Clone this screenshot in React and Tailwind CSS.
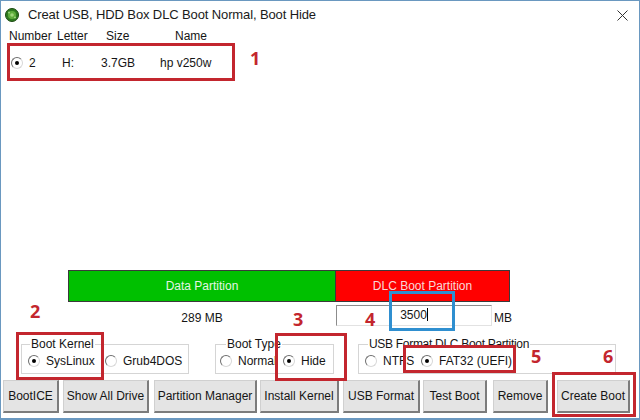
import React from "react";

const Radio = ({ checked }) => (
  <span className="flex-none w-[12px] h-[12px] rounded-full bg-white border border-t-[#6e6e6e] border-l-[#6e6e6e] border-r-[#d8d8d8] border-b-[#d8d8d8] flex items-center justify-center">
    {checked && <span className="w-[4px] h-[4px] rounded-full bg-black"></span>}
  </span>
);

const Option = ({ checked, label, className = "" }) => (
  <div className={"flex items-center " + className}>
    <Radio checked={checked} />
    <span className="ml-[6px] whitespace-nowrap">{label}</span>
  </div>
);

const buttons = [
  { label: "BootICE", cls: "ml-[2px] w-[56px]" },
  { label: "Show All Drive", cls: "ml-[4px] w-[86px]" },
  { label: "Partition Manager", cls: "ml-[5px] w-[103px]" },
  { label: "Install Kernel", cls: "ml-[3px] w-[79px]" },
  { label: "USB Format", cls: "ml-[4px] w-[77px]" },
  { label: "Test Boot", cls: "ml-[3px] w-[64px]" },
  { label: "Remove", cls: "ml-[6px] w-[55px]" },
  { label: "Create Boot", cls: "ml-[9px] w-[73px]" },
];

const AppIcon = () => (
  <svg width="14" height="14" viewBox="0 0 14 14">
    <circle cx="7" cy="7" r="6.5" fill="#2e7a1f" stroke="#1c4a12" />
    <circle cx="7" cy="7" r="4" fill="#5fae3c" />
    <circle cx="7" cy="7" r="1.8" fill="#9fd67a" />
    <circle cx="4" cy="4.5" r="0.9" fill="#a8dc88" />
    <circle cx="10" cy="9.5" r="0.9" fill="#a8dc88" />
  </svg>
);

export default function App() {
  return (
    <div className="relative w-[640px] h-[420px] box-border bg-white border border-[#6a98c0] border-b-2 overflow-hidden text-[12px] leading-[14px] text-[#151515] font-['Liberation_Sans',Arial,sans-serif]">
      {/* title bar */}
      <div className="flex items-center h-[28px] pl-[4px] pr-[11px]">
        <AppIcon />
        <span className="ml-[9px] text-[13px] tracking-[-0.12px] text-[#1a1a1a]">Creat USB, HDD Box DLC Boot Normal, Boot Hide</span>
        <svg className="ml-auto" width="11" height="11" viewBox="0 0 11 11">
          <path d="M0.5 0.5 L10.5 10.5 M10.5 0.5 L0.5 10.5" stroke="#333" strokeWidth="1" />
        </svg>
      </div>

      {/* drive list header */}
      <div className="flex h-[14px] pl-[8px]">
        <span className="w-[48px]">Number</span>
        <span className="w-[49px]">Letter</span>
        <span className="w-[69px]">Size</span>
        <span>Name</span>
      </div>

      {/* drive list */}
      <div className="h-[227px] pt-[13px]">
        <div className="flex items-center h-[14px] pl-[10px]">
          <span className="w-[18px]">
            <Radio checked />
          </span>
          <span className="w-[33px]">2</span>
          <span className="w-[39px]">H:</span>
          <span className="w-[59px]">3.7GB</span>
          <span>hp v250w</span>
        </div>
      </div>

      {/* partition bar */}
      <div className="ml-[67px] w-[442px] h-[32px] border border-[#3a3a3a] flex">
        <div className="w-[267px] bg-[#00c000] border-r border-[#3a3a3a] flex items-center justify-center text-[#e4f6e4]">
          Data Partition
        </div>
        <div className="flex-1 bg-[#ff0000] flex items-center justify-center text-[#f8d8d8]">
          DLC Boot Partition
        </div>
      </div>

      {/* sizes */}
      <div className="flex ml-[67px] mt-[3px] h-[21px]">
        <div className="w-[268px] pt-[6px] text-center">289 MB</div>
        <div className="w-[156px] h-[21px] box-border border border-t-[#8c8c8c] border-l-[#8c8c8c] border-r-[#e2e2e2] border-b-[#e2e2e2] flex items-start justify-center pt-[2px]">
          <span>3500</span>
          <span className="w-px h-[13px] bg-black"></span>
        </div>
        <div className="ml-[2px] pt-[6px]">MB</div>
      </div>

      {/* option groups */}
      <div className="flex mt-[11px]">
        <fieldset className="ml-[20px] w-[168px] border border-[#d5d5d5] pl-[6px] pb-[4px]">
          <legend className="ml-[2px] px-[1px] leading-[14px]">Boot Kernel</legend>
          <div className="flex items-center h-[16px] mt-[2px]">
            <Option checked label="SysLinux" className="w-[77px]" />
            <Option label="Grub4DOS" />
          </div>
        </fieldset>
        <fieldset className="ml-[26px] w-[119px] border border-[#d5d5d5] pl-[4px] pb-[4px]">
          <legend className="ml-[6px] px-[1px] leading-[14px]">Boot Type</legend>
          <div className="flex items-center h-[16px] mt-[2px]">
            <Option label="Normal" className="w-[63px]" />
            <Option checked label="Hide" />
          </div>
        </fieldset>
        <fieldset className="ml-[24px] w-[258px] border border-[#d5d5d5] pl-[6px] pb-[4px]">
          <legend className="ml-[3px] px-[1px] leading-[14px] tracking-[-0.3px]">USB Format DLC Boot Partition</legend>
          <div className="flex items-center h-[16px] mt-[2px]">
            <Option label="NTFS" className="w-[56px]" />
            <Option checked label="FAT32 (UEFI)" />
          </div>
        </fieldset>
      </div>

      {/* buttons */}
      <div className="flex mt-[6px]">
        {buttons.map((b) => (
          <button
            key={b.label}
            className={
              "h-[33px] box-border bg-[#e4e4e4] border border-t-[#d0d0d0] border-l-[#d0d0d0] border-r-2 border-b-2 border-r-[#7c7c7c] border-b-[#7c7c7c] whitespace-nowrap text-[12px] " +
              b.cls
            }
          >
            {b.label}
          </button>
        ))}
      </div>

      {/* annotations */}
      <div className="absolute left-[6px] top-[42px] w-[228px] h-[38px] border-[3px] border-[#c3262e]"></div>
      <div className="absolute left-[15px] top-[331px] w-[88px] h-[48px] border-[3px] border-[#c3262e]"></div>
      <div className="absolute left-[274px] top-[332px] w-[72px] h-[48px] border-[3px] border-[#c3262e]"></div>
      <div className="absolute left-[402px] top-[344px] w-[113px] h-[28px] border-[3px] border-[#c3262e]"></div>
      <div className="absolute left-[551px] top-[371px] w-[84px] h-[45px] border-[3px] border-[#c3262e]"></div>
      <div className="absolute left-[388px] top-[290px] w-[66px] h-[40px] border-[3px] border-[#2f8fd0]"></div>

      <span className="absolute left-[249px] top-[48px] text-[18px] leading-none font-bold text-[#c3262e] font-['Open_Sans',sans-serif]">1</span>
      <span className="absolute left-[29px] top-[301px] text-[18px] leading-none font-bold text-[#c3262e] font-['Open_Sans',sans-serif]">2</span>
      <span className="absolute left-[292px] top-[309px] text-[18px] leading-none font-bold text-[#c3262e] font-['Open_Sans',sans-serif]">3</span>
      <span className="absolute left-[364px] top-[309px] text-[18px] leading-none font-bold text-[#c3262e] font-['Open_Sans',sans-serif]">4</span>
      <span className="absolute left-[530px] top-[346px] text-[18px] leading-none font-bold text-[#c3262e] font-['Open_Sans',sans-serif]">5</span>
      <span className="absolute left-[602px] top-[346px] text-[18px] leading-none font-bold text-[#c3262e] font-['Open_Sans',sans-serif]">6</span>
    </div>
  );
}
